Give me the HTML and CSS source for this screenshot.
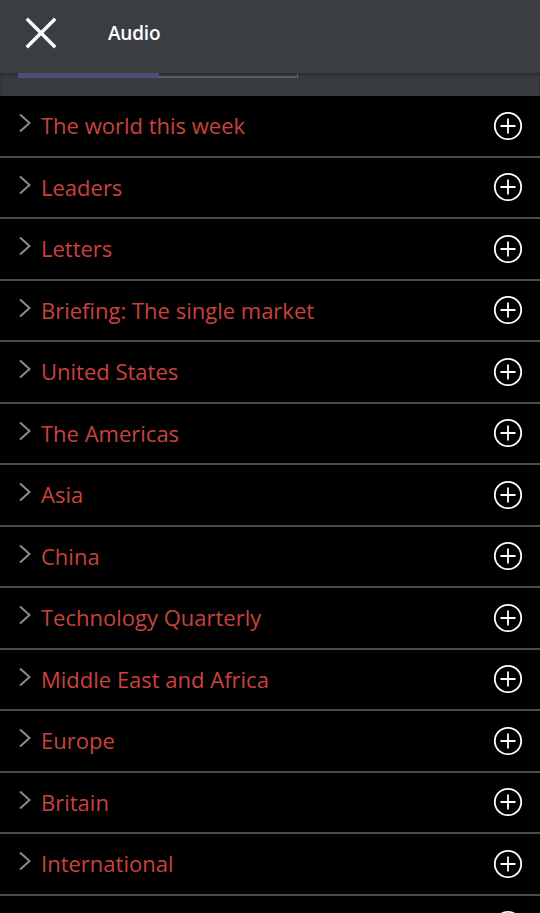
FILE: index.html
```html
<!DOCTYPE html>
<html lang="en">
<head>
    <meta charset="UTF-8">
    <meta name="viewport" content="width=device-width, initial-scale=1.0">
    <title>Audio</title>
    <link rel="stylesheet" href="styles.css">
</head>
<body>
    <header id="topbar">
        <div class="toolbar">
            <svg class="close" width="32" height="32" viewBox="0 0 32 32">
                <path d="M3 3 L29 29 M29 3 L3 29" stroke="#fff" stroke-width="3.4" stroke-linecap="square"/>
            </svg>
            <h1>Audio</h1>
        </div>
        <div class="tabs">
            <div class="progress"><span></span></div>
        </div>
    </header>

    <ul id="sections"></ul>

    <script>
        let sections = ["The world this week","Leaders","Letters","Briefing: The single market","United States","The Americas","Asia","China","Technology Quarterly","Middle East and Africa","Europe","Britain","International",""];

        let list = document.getElementById("sections");
        sections.forEach((name) => {
            let row = document.createElement("li");
            row.innerHTML = `
                <svg class="chev" width="14" height="20" viewBox="0 0 14 20"><path d="M2 1.5 L11.5 10 L2 18.5" fill="none" stroke="#8a8a8a" stroke-width="2"/></svg>
                <span class="name">${name}</span>
                <svg class="add" width="30" height="30" viewBox="0 0 30 30"><circle cx="15" cy="15" r="13.2" fill="none" stroke="#fff" stroke-width="1.8"/><path d="M15 7.5 V22.5 M7.5 15 H22.5" stroke="#fff" stroke-width="1.8"/></svg>`;
            list.append(row);
        });
    </script>
</body>
</html>
```
FILE: styles.css
```css
*{
    margin: 0px;
    padding: 0px;
    box-sizing: border-box;
}
body{
    background-color: #000;
    font-family: "Open Sans", "Noto Sans", sans-serif;
    width: 540px;
    height: 913px;
    overflow: hidden;
}
#topbar{
    background-color: #3a3e42;
    height: 96px;
}
.toolbar{
    height: 73px;
    display: flex;
    align-items: center;
    padding-left: 25px;
    padding-bottom: 8px;
}
.toolbar h1{
    color: #fff;
    font-size: 19px;
    font-weight: 600;
    margin-left: 51px;
    letter-spacing: -0.2px;
}
.tabs{
    height: 23px;
    background-color: #383c40;
    box-shadow: inset 0 2px 3px rgba(0,0,0,0.25);
}
.progress{
    margin-left: 18px;
    width: 280px;
    height: 5px;
    border-bottom: 2px solid #5b5f63;
    border-right: 1px solid #5b5f63;
}
.progress span{
    display: block;
    width: 141px;
    height: 5px;
    background-color: #4b5078;
}
#sections{
    list-style: none;
}
#sections li{
    height: 61.5px;
    border-bottom: 2px solid #4a4a4a;
    display: flex;
    align-items: center;
    padding-left: 18px;
    padding-right: 17px;
}
.chev{
    margin-bottom: 5px;
}
.name{
    flex: 1;
    color: #c9423d;
    font-size: 22px;
    margin-left: 9px;
    margin-bottom: 1px;
}
```
